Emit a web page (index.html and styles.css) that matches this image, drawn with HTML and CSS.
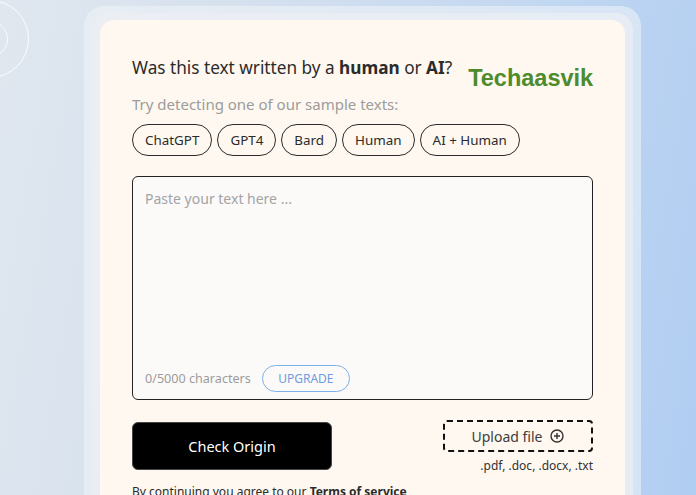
FILE: index.html
```html
<!DOCTYPE html>
<html lang="en">
<head>
    <meta charset="UTF-8">
    <meta name="viewport" content="width=device-width, initial-scale=1.0">
    <title>AI Content Detector</title>
    <link rel="stylesheet" href="styles.css">
</head>
<body>
    <!-- decorative rings in the corner -->
    <div class="rings">
        <span class="ring ring-1"></span>
        <span class="ring ring-2"></span>
    </div>

    <div class="frame">
        <div class="frame-inner">
            <div class="card">
                <div class="card-head">
                    <h1>Was this text written by a <b>human</b> or <b>AI</b>?</h1>
                    <span class="brand">Techaasvik</span>
                </div>

                <p class="hint">Try detecting one of our sample texts:</p>
                <div class="samples">
                    <button class="chip">ChatGPT</button>
                    <button class="chip">GPT4</button>
                    <button class="chip">Bard</button>
                    <button class="chip">Human</button>
                    <button class="chip">AI + Human</button>
                </div>

                <div class="editor">
                    <textarea placeholder="Paste your text here ..."></textarea>
                    <div class="editor-foot">
                        <span class="count">0/5000 characters</span>
                        <button class="upgrade">UPGRADE</button>
                    </div>
                </div>

                <div class="actions">
                    <button class="check">Check Origin</button>
                    <div class="upload">
                        <button class="upload-btn">
                            Upload file
                            <svg width="14" height="14" viewBox="0 0 14 14">
                                <circle cx="7" cy="7" r="6" fill="none" stroke="#333" stroke-width="1.4"/>
                                <path d="M7 4v6M4 7h6" stroke="#333" stroke-width="1.4"/>
                            </svg>
                        </button>
                        <span class="types">.pdf, .doc, .docx, .txt</span>
                    </div>
                </div>

                <p class="terms">By continuing you agree to our <b>Terms of service</b></p>
            </div>
        </div>
    </div>
</body>
</html>
```

FILE: styles.css
```css
* {
    box-sizing: border-box;
    margin: 0;
    padding: 0;
}

body {
    font-family: 'Noto Sans', sans-serif;
    height: 495px;
    overflow: hidden;
    background: linear-gradient(100deg, #e0e7ef 0%, #d6e1ee 30%, #c2d7f1 70%, #b0cdf2 100%);
    padding: 6px 0 0 84px;
}

.rings {
    position: absolute;
    left: 0;
    top: 0;
}

.ring {
    position: absolute;
    border: 1px solid rgba(255, 255, 255, 0.85);
    border-radius: 50%;
}

.ring-1 {
    width: 78px;
    height: 78px;
    left: -49px;
    top: 0;
}

.ring-2 {
    width: 36px;
    height: 36px;
    left: -28px;
    top: 21px;
}

.frame {
    width: 557px;
    padding: 7px 8px 0;
    background: rgba(240, 244, 248, 0.55);
    border-radius: 20px 20px 0 0;
}

.frame-inner {
    padding: 7px 8px 0;
    background: rgba(236, 240, 244, 0.7);
    border-radius: 17px 17px 0 0;
}

.card {
    background-color: #fef8f0;
    border-radius: 14px 14px 0 0;
    padding: 37px 32px 0;
    height: 480px;
    color: #2b2b2b;
}

.card-head {
    display: flex;
    align-items: flex-start;
}

h1 {
    font-size: 17.2px;
    font-weight: 400;
    color: #2b2b2b;
    line-height: 22px;
    white-space: nowrap;
    flex-shrink: 0;
}

h1 b {
    font-weight: 700;
}

.brand {
    font-family: 'Liberation Sans', Arial, sans-serif;
    font-weight: 700;
    font-size: 23.5px;
    color: #4d8b2c;
    white-space: nowrap;
    margin: 8px 0 0 16px;
}

.hint {
    font-size: 15px;
    color: #9c9c9c;
    margin-top: 2px;
}

.samples {
    display: flex;
    gap: 5px;
    margin-top: 10px;
}

.chip {
    font-family: inherit;
    font-size: 13.4px;
    color: #2b2b2b;
    background: transparent;
    border: 1px solid #2b2b2b;
    border-radius: 16px;
    height: 32px;
    padding: 0 12px;
}

.editor {
    margin-top: 20px;
    height: 224px;
    border: 1px solid #222;
    border-radius: 6px;
    background-color: #fbfaf8;
    display: flex;
    flex-direction: column;
    padding: 12px 12px 7px;
}

textarea {
    flex: 1;
    border: none;
    resize: none;
    background: transparent;
    font-family: inherit;
    font-size: 14px;
    outline: none;
}

textarea::placeholder {
    color: #a3a3a7;
}

.editor-foot {
    display: flex;
    align-items: center;
    gap: 11px;
}

.count {
    font-size: 12.6px;
    color: #9c9c9c;
}

.upgrade {
    font-family: inherit;
    font-size: 12px;
    color: #6f9be0;
    background: transparent;
    border: 1px solid #7eafe8;
    border-radius: 14px;
    height: 27px;
    width: 88px;
}

.actions {
    display: flex;
    justify-content: space-between;
    align-items: flex-start;
    margin-top: 20px;
}

.check {
    font-family: inherit;
    width: 200px;
    height: 48px;
    background: #000;
    color: #fff;
    border: 1px solid #444;
    border-radius: 6px;
    font-size: 14.5px;
    margin-top: 2px;
}

.upload {
    display: flex;
    flex-direction: column;
    align-items: flex-end;
}

.upload-btn {
    font-family: inherit;
    width: 150px;
    height: 32px;
    border: 2px dashed #111;
    border-radius: 4px;
    background: transparent;
    font-size: 14px;
    color: #3d3d3d;
    display: flex;
    align-items: center;
    justify-content: center;
    gap: 8px;
}

.types {
    font-size: 12px;
    color: #333;
    margin-top: 5px;
}

.terms {
    font-size: 12px;
    margin-top: 9px;
    color: #2b2b2b;
}
```
